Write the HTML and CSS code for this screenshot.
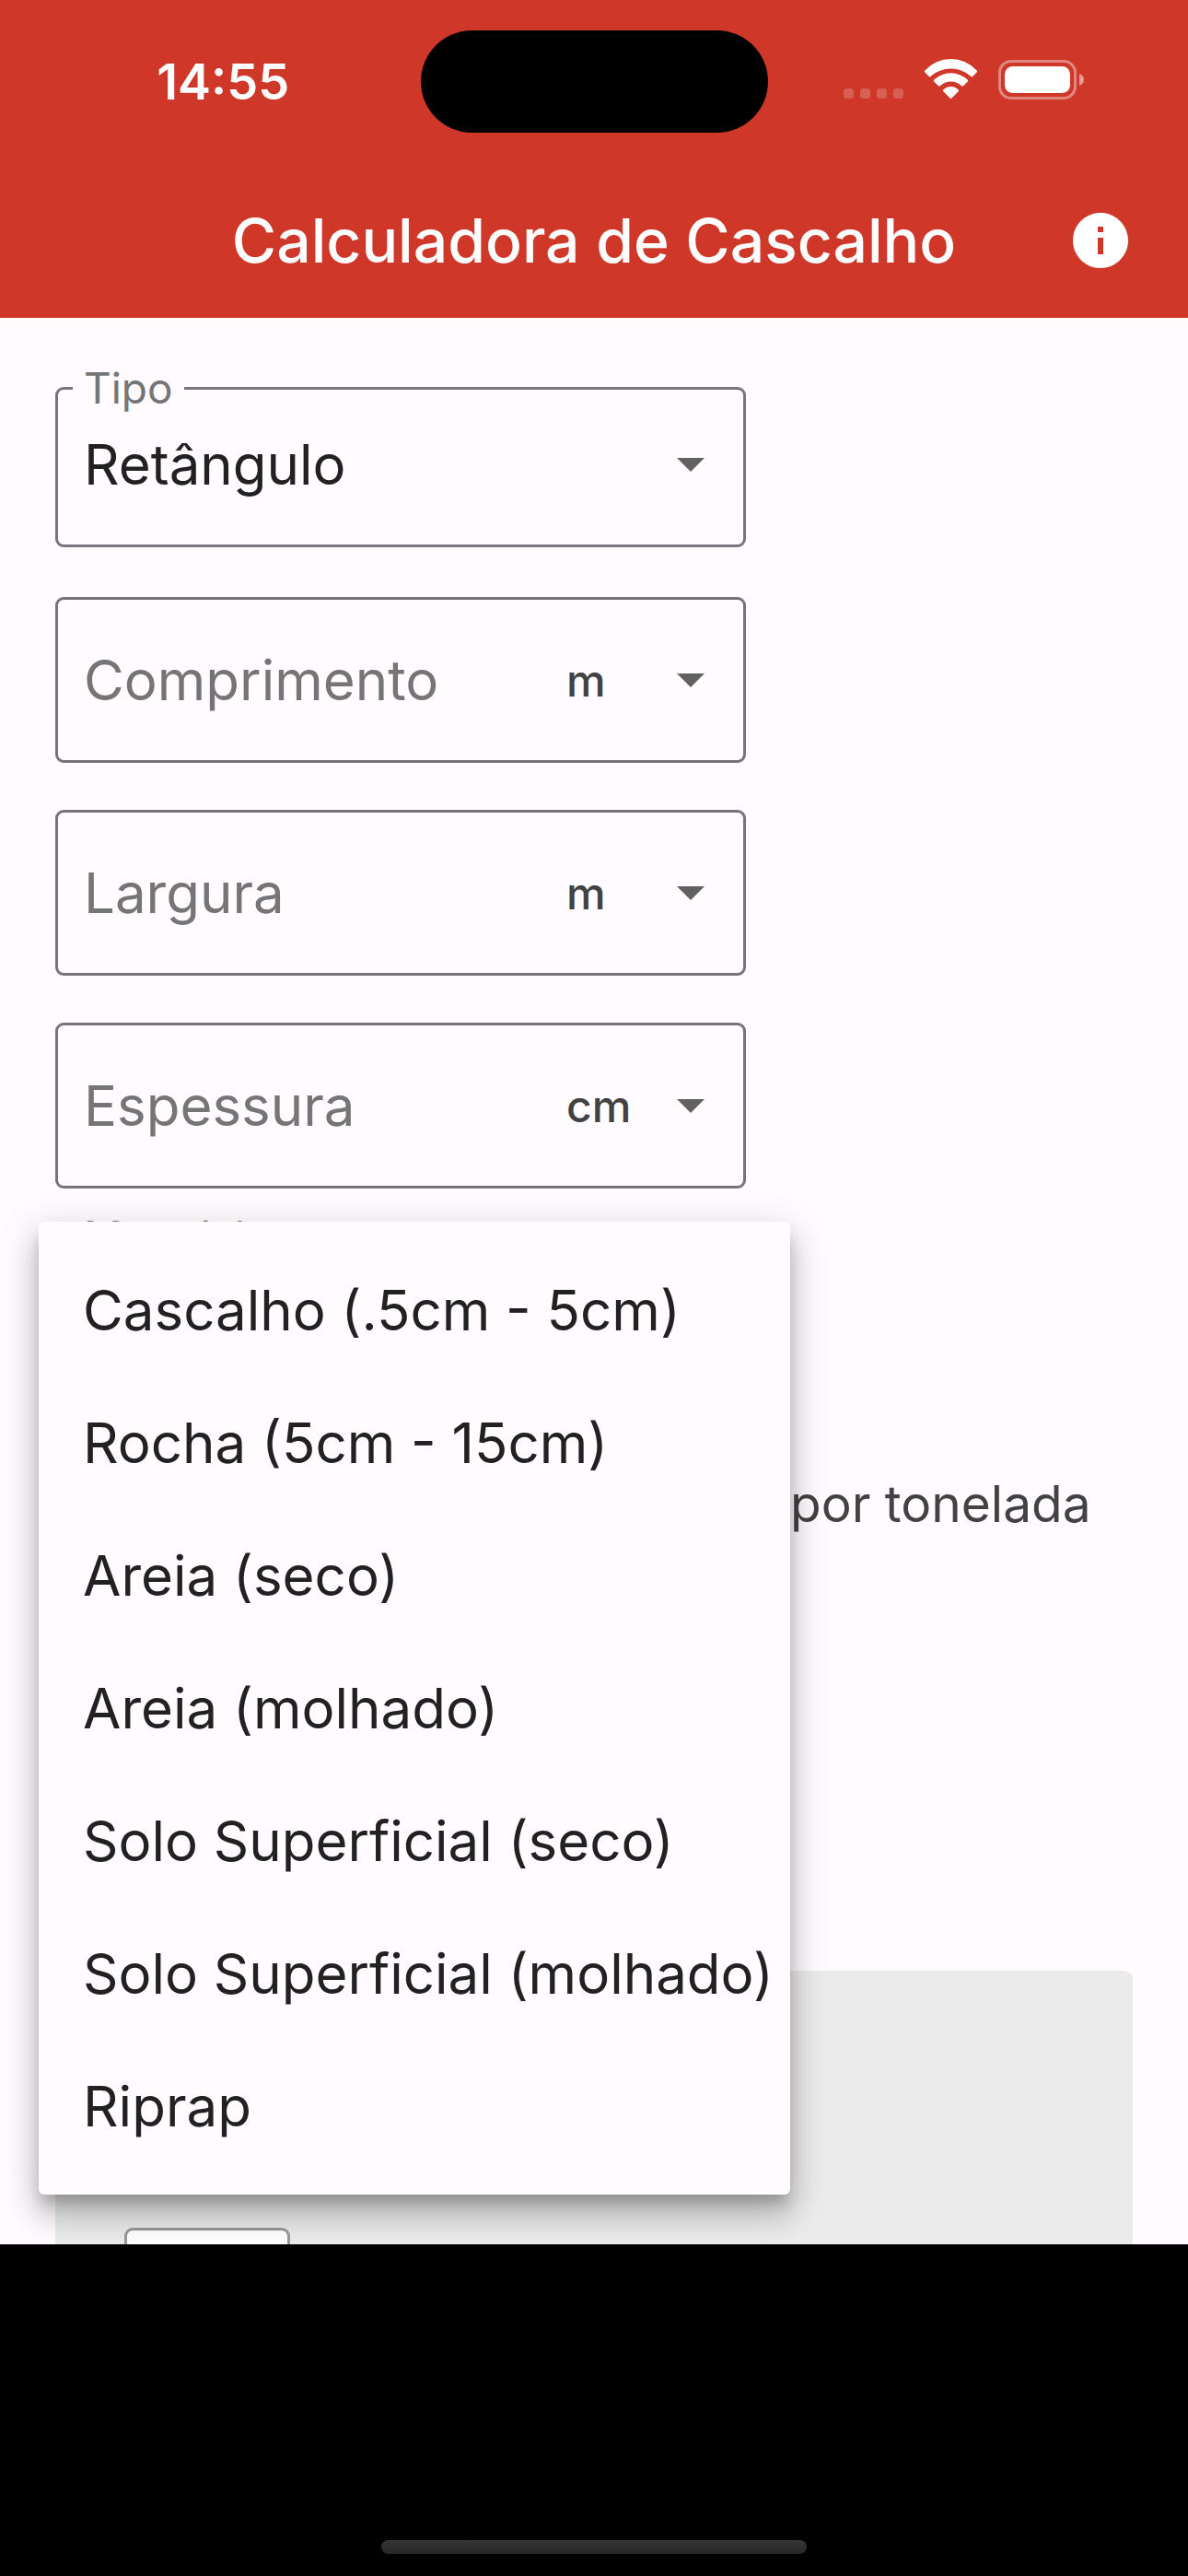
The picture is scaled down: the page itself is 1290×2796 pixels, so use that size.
FILE: index.html
```html
<!DOCTYPE html>
<html lang="pt">
<head>
  <meta charset="utf-8">
  <meta name="viewport" content="width=device-width, initial-scale=1">
  <title>Calculadora de Cascalho</title>
  <link rel="stylesheet" href="styles.css">
</head>
<body>
  <div class="app">
    <header class="header">
      <div class="status">
        <time class="status-time">14:55</time>
        <div class="island"></div>
        <svg class="status-icons" width="268" height="54" viewBox="0 0 268 54" fill="#fff" aria-hidden="true">
          <g fill-opacity=".2">
            <rect x="6" y="36" width="11" height="11" rx="3.5"/>
            <rect x="24" y="36" width="11" height="11" rx="3.5"/>
            <rect x="42" y="36" width="11" height="11" rx="3.5"/>
            <rect x="60" y="36" width="11" height="11" rx="3.5"/>
          </g>
          <path d="M94.4 18.6Q93.3 17.6 94.4 16.5A38 38 0 0 1 150.6 16.5Q151.7 17.6 150.6 18.6L146.2 23Q145.4 23.8 144.5 23A32.6 32.6 0 0 0 100.5 23Q99.6 23.8 98.8 23Z"/>
          <path d="M104.4 28.8Q103.3 27.7 104.4 26.6A26 26 0 0 1 140.6 26.6Q141.7 27.7 140.6 28.8L136 33.2Q135.1 34 134.2 33.2A17 17 0 0 0 110.8 33.2Q109.9 34 109 33.2Z"/>
          <path d="M114.3 39.2Q113.4 38.2 114.4 37.3A11.5 11.5 0 0 1 130.6 37.3Q131.6 38.2 130.7 39.2L123.2 46.8Q122.5 47.4 121.8 46.8Z"/>
          <rect x="175.5" y="6.500" width="82" height="40" rx="12.500" fill="none" stroke="#fff" stroke-opacity=".4" stroke-width="3"/>
          <rect x="181" y="12" width="71" height="29" rx="8.500"/>
          <path d="M262 20Q267 22 267 26.500T262 33Z" fill-opacity=".5"/>
        </svg>
      </div>
      <div class="appbar">
        <h1 class="title">Calculadora de Cascalho</h1>
        <button class="info" type="button" aria-label="Informações">
          <svg width="72" height="72" viewBox="0 0 24 24" fill="#fff" aria-hidden="true">
            <path d="M12 2C6.480 2 2 6.480 2 12s4.480 10 10 10 10-4.480 10-10S17.520 2 12 2zm1 15h-2v-6h2v6zm0-8h-2V7h2v2z"/>
          </svg>
        </button>
      </div>
    </header>

    <main class="main">
      <form class="form">
        <div class="field field-select">
          <label class="float-label" for="tipo">Tipo</label>
          <select class="select" id="tipo"><option>Retângulo</option></select>
          <svg class="arrow" viewBox="0 0 30 15" aria-hidden="true"><path d="M0 0H30L15 15Z"/></svg>
        </div>

        <div class="field field-input first">
          <label class="hint" for="comprimento">Comprimento</label>
          <input class="input" id="comprimento" type="text" inputmode="decimal">
          <select class="unit" aria-label="Unidade do comprimento"><option>m</option></select>
          <svg class="arrow" viewBox="0 0 30 15" aria-hidden="true"><path d="M0 0H30L15 15Z"/></svg>
        </div>

        <div class="field field-input">
          <label class="hint" for="largura">Largura</label>
          <input class="input" id="largura" type="text" inputmode="decimal">
          <select class="unit" aria-label="Unidade da largura"><option>m</option></select>
          <svg class="arrow" viewBox="0 0 30 15" aria-hidden="true"><path d="M0 0H30L15 15Z"/></svg>
        </div>

        <div class="field field-input">
          <label class="hint" for="espessura">Espessura</label>
          <input class="input" id="espessura" type="text" inputmode="decimal">
          <select class="unit" aria-label="Unidade da espessura"><option>cm</option></select>
          <svg class="arrow" viewBox="0 0 30 15" aria-hidden="true"><path d="M0 0H30L15 15Z"/></svg>
        </div>

        <div class="field field-select">
          <label class="float-label" for="material">Material</label>
          <button class="select" id="material" type="button" aria-haspopup="listbox" aria-expanded="true"></button>
          <div class="menu" role="listbox" aria-label="Material">
            <button class="option" type="button" role="option">Cascalho (.5cm - 5cm)</button>
            <button class="option" type="button" role="option">Rocha (5cm - 15cm)</button>
            <button class="option" type="button" role="option">Areia (seco)</button>
            <button class="option" type="button" role="option">Areia (molhado)</button>
            <button class="option" type="button" role="option">Solo Superficial (seco)</button>
            <button class="option" type="button" role="option">Solo Superficial (molhado)</button>
            <button class="option" type="button" role="option">Riprap</button>
          </div>
        </div>

        <div class="field price"><input class="input" id="preco" type="text" inputmode="decimal"></div>
        <label class="suffix" for="preco">por tonelada</label>
      </form>

      <section class="result">
        <input class="result-value" type="text" aria-label="Resultado" readonly>
      </section>
    </main>

    <footer class="footer"><div class="home-bar"></div></footer>
  </div>
</body>
</html>
```
FILE: styles.css
```css
* { box-sizing: border-box; }

body {
  margin: 0;
  background: #000;
  color: #212121;
  font-family: Inter, "Liberation Sans", sans-serif;
}

button, input, select {
  margin: 0;
  padding: 0;
  border: 0;
  background: none;
  color: inherit;
  font: inherit;
  appearance: none;
  outline: 0;
}

.app {
  display: flex;
  flex-direction: column;
  height: 100vh;
}

/* Header */
.header { background: #cf3729; color: #fff; }

.status {
  display: grid;
  grid-template-columns: 1fr 377px 1fr;
  align-items: center;
  height: 177px;
}
.status-time {
  padding-left: 28px;
  text-align: center;
  font-size: 54px;
  font-weight: 600;
}
.island { height: 111px; border-radius: 56px; background: #000; }
.status-icons { justify-self: end; margin: 0 112px 4px 0; }

.appbar {
  display: grid;
  grid-template-columns: 1fr auto 1fr;
  align-items: center;
  height: 168px;
  padding: 0 59px;
}
.title {
  grid-column: 2;
  margin: 0;
  font-size: 66px;
  font-weight: 500;
}
.info { justify-self: end; height: 72px; }
.info svg { display: block; }

/* Form */
.main {
  flex: 1;
  min-height: 0;
  overflow: hidden;
  padding: 75px 60px 0;
  background: #fffbff;
}
.form {
  display: grid;
  grid-template-columns: 25fr 14fr;
  row-gap: 51px;
}
.field {
  position: relative;
  grid-column: 1;
  display: grid;
  grid-template-columns: 1fr 168px;
  align-items: center;
  border: 3px solid #757575;
  border-radius: 9px;
  padding: 0 24px 0 28px;
  font-size: 60px;
}
.field-select { height: 174px; padding-bottom: 6px; border-color: #79747e; }
.field-input { height: 180px; }
.first { margin-top: 3px; }

.float-label {
  position: absolute;
  left: 16px;
  top: -29px;
  padding: 0 12px;
  background: #fffbff;
  color: #757575;
  font-size: 46px;
  line-height: 54px;
}
.hint { grid-area: 1 / 1; color: #757575; }
.input { grid-area: 1 / 1; width: 100%; height: 100%; }
.select { grid-area: 1 / 1 / 2 / 3; width: 100%; height: 100%; }
.unit {
  grid-area: 1 / 2;
  width: 100%;
  height: 100%;
  color: #424242;
  font-size: 48px;
  font-weight: 500;
}
.arrow {
  grid-area: 1 / 2;
  justify-self: end;
  width: 30px;
  height: 15px;
  margin-right: 18px;
  fill: #616161;
  pointer-events: none;
}
.price { height: 132px; }
.suffix {
  align-self: center;
  padding-left: 48px;
  color: #424242;
  font-size: 55px;
  white-space: nowrap;
}

/* Open list of materials */
.menu {
  position: absolute;
  z-index: 1;
  top: -18px;
  left: -21px;
  right: -51px;
  padding: 24px 0;
  border-radius: 6px;
  background: #fffbff;
  box-shadow: 0 12px 15px -3px rgba(0, 0, 0, .2), 0 24px 30px 3px rgba(0, 0, 0, .14), 0 9px 42px 6px rgba(0, 0, 0, .12);
}
.option {
  display: block;
  width: 100%;
  height: 144px;
  padding-left: 48px;
  text-align: left;
  white-space: nowrap;
}

/* Result card */
.result {
  height: 600px;
  margin-top: 441px;
  padding: 279px 75px 0;
  border-radius: 9px;
  background: #ebebeb;
}
.result-value {
  width: 180px;
  height: 120px;
  border: 3px solid #999;
  border-radius: 9px;
  background: #fff;
}

.footer {
  display: flex;
  justify-content: center;
  align-items: flex-end;
  height: 360px;
  padding-bottom: 24px;
}
.home-bar {
  width: 462px;
  height: 15px;
  border-radius: 8px;
  background: linear-gradient(#353535, #272727);
}
```
